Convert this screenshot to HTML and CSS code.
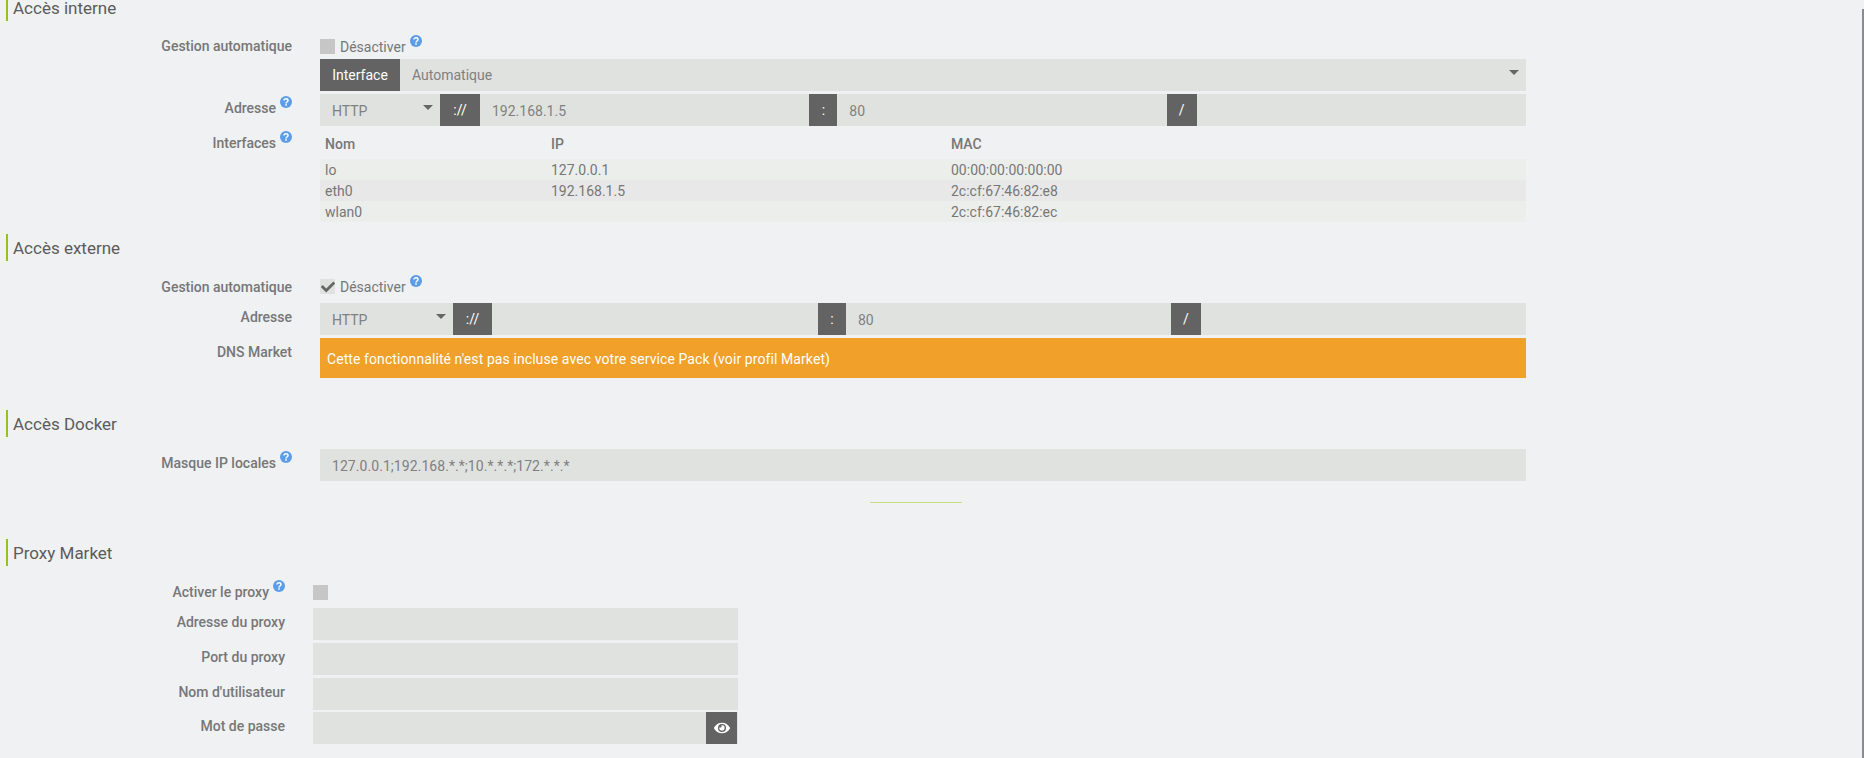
FILE: index.html
```html
<!DOCTYPE html>
<html lang="fr">
<head>
<meta charset="utf-8">
<title>Accès réseau</title>
<link rel="stylesheet" href="styles.css">
</head>
<body>
<svg class="defs" width="0" height="0" aria-hidden="true">
  <symbol id="help" viewBox="0 0 12 12">
    <circle cx="6" cy="6" r="6" fill="#5c9ce8"/>
    <path d="M4 4.6C4 3.4 4.9 2.8 6 2.8s2 .7 2 1.7c0 1.5-2 1.5-2 3" fill="none" stroke="#fff" stroke-width="1.5"/>
    <rect x="5.2" y="8.2" width="1.6" height="1.5" fill="#fff"/>
  </symbol>
</svg>
<main class="page">
  <section class="section">
    <h2 class="legend">Accès interne</h2>
    <div class="row row-check row-first">
      <div class="lbl">Gestion automatique</div>
      <div class="check-line"><span class="check"></span><span>Désactiver</span><svg class="help"><use href="#help"/></svg></div>
    </div>
    <div class="row row-flush">
      <div class="lbl"></div>
      <div class="grp"><span class="addon addon-if">Interface</span><div class="sel sel-fill"><select class="ctl"><option>Automatique</option></select><span class="caret"></span></div></div>
    </div>
    <div class="row">
      <div class="lbl">Adresse<svg class="help"><use href="#help"/></svg></div>
      <div class="grp"><div class="sel sel-a"><select class="ctl"><option>HTTP</option></select><span class="caret"></span></div><span class="addon addon-a">://</span><input class="ctl" value="192.168.1.5"><span class="addon addon-c">:</span><input class="ctl" value="80"><span class="addon addon-s">/</span><input class="ctl" value=""></div>
    </div>
    <div class="row">
      <div class="lbl">Interfaces<svg class="help"><use href="#help"/></svg></div>
      <table class="tbl">
        <thead><tr><th class="c1">Nom</th><th class="c2">IP</th><th>MAC</th></tr></thead>
        <tbody>
          <tr><td>lo</td><td>127.0.0.1</td><td>00:00:00:00:00:00</td></tr>
          <tr><td>eth0</td><td>192.168.1.5</td><td>2c:cf:67:46:82:e8</td></tr>
          <tr><td>wlan0</td><td></td><td>2c:cf:67:46:82:ec</td></tr>
        </tbody>
      </table>
    </div>
  </section>

  <section class="section">
    <h2 class="legend">Accès externe</h2>
    <div class="row row-check">
      <div class="lbl">Gestion automatique</div>
      <div class="check-line"><span class="check check-on"><svg class="tick" viewBox="0 0 512 512"><path d="M173.898 439.404l-166.4-166.4c-9.997-9.997-9.997-26.206 0-36.204l36.203-36.204c9.997-9.998 26.207-9.998 36.204 0L192 312.69 432.095 72.596c9.997-9.997 26.207-9.997 36.204 0l36.203 36.204c9.997 9.997 9.997 26.206 0 36.204l-294.4 294.401c-9.998 9.997-26.207 9.997-36.204-.001z"/></svg></span><span>Désactiver</span><svg class="help"><use href="#help"/></svg></div>
    </div>
    <div class="row row-flush">
      <div class="lbl">Adresse</div>
      <div class="grp"><div class="sel sel-b"><select class="ctl"><option>HTTP</option></select><span class="caret"></span></div><span class="addon addon-b">://</span><input class="ctl ctl-host" value=""><span class="addon addon-c">:</span><input class="ctl" value="80"><span class="addon addon-s">/</span><input class="ctl" value=""></div>
    </div>
    <div class="row">
      <div class="lbl">DNS Market</div>
      <div class="alert">Cette fonctionnalité n'est pas incluse avec votre service Pack (voir profil Market)</div>
    </div>
  </section>

  <section class="section section-far">
    <h2 class="legend">Accès Docker</h2>
    <div class="row">
      <div class="lbl">Masque IP locales<svg class="help"><use href="#help"/></svg></div>
      <div class="grp"><input class="ctl ctl-mask" value="127.0.0.1;192.168.*.*;10.*.*.*;172.*.*.*"></div>
    </div>
    <hr class="rule">
  </section>

  <section class="section section-proxy">
    <h2 class="legend">Proxy Market</h2>
    <div class="row row-check row-low">
      <div class="lbl">Activer le proxy<svg class="help"><use href="#help"/></svg></div>
      <div class="check-line"><span class="check"></span></div>
    </div>
    <div class="row row-flush">
      <div class="lbl">Adresse du proxy</div>
      <div class="grp"><input class="ctl" value=""></div>
    </div>
    <div class="row">
      <div class="lbl">Port du proxy</div>
      <div class="grp"><input class="ctl" value=""></div>
    </div>
    <div class="row">
      <div class="lbl">Nom d'utilisateur</div>
      <div class="grp"><input class="ctl" value=""></div>
    </div>
    <div class="row row-tight">
      <div class="lbl">Mot de passe</div>
      <div class="grp grp-pass"><input class="ctl" type="password" value=""><span class="addon addon-eye"><svg class="eye" viewBox="0 0 576 512"><path d="M572.52 241.4C518.29 135.59 410.93 64 288 64S57.68 135.64 3.48 241.41a32.35 32.35 0 0 0 0 29.19C57.71 376.41 165.07 448 288 448s230.32-71.64 284.52-177.41a32.35 32.35 0 0 0 0-29.19zM288 400a144 144 0 1 1 144-144 143.93 143.93 0 0 1-144 144zm0-240a95.31 95.31 0 0 0-25.31 3.79 47.85 47.85 0 0 1-66.9 66.9A95.78 95.78 0 1 0 288 160z"/></svg></span></div>
    </div>
  </section>
</main>
<div class="scrollbar"></div>
</body>
</html>
```
FILE: styles.css
```css
* { box-sizing: border-box; }
html, body { margin: 0; height: 758px; overflow: hidden; }
body {
  background: #eff1f3;
  color: #777;
  font-family: Roboto, "Liberation Sans", sans-serif;
  font-size: 14px;
  position: relative;
}
.defs { position: absolute; }
.page { margin-top: -6px; padding-left: 6px; width: 1526px; }
.section { margin-bottom: 12px; }
.section-far { margin-top: 32px; margin-bottom: 0; }
.section-proxy { width: 732px; margin-top: 0; }
.legend {
  margin: 0 0 12px;
  height: 27px;
  line-height: 29px;
  padding-left: 5px;
  border-left: 2px solid #93c11e;
  font-size: 17px;
  font-weight: 400;
  color: #5c5c5c;
  white-space: nowrap;
}
.row {
  display: grid;
  grid-template-columns: 284px 1fr;
  column-gap: 28px;
  margin-left: 2px;
  margin-top: 3px;
}
.section-proxy .row { grid-template-columns: 277px 1fr; }
.legend + .row { margin-top: 0; }
.row-flush { margin-top: 0; }
.row-tight { margin-top: 2px; }
.row-check { height: 30px; }
.row-first { height: 26px; }
.lbl {
  display: flex;
  justify-content: flex-end;
  gap: 4px;
  padding-top: 4px;
  line-height: 20px;
  font-size: 14px;
  font-weight: 500;
  color: #777;
  white-space: nowrap;
}
.row-first .lbl { padding-top: 3px; }
.help { width: 12px; height: 12px; flex: none; margin-top: -2px; }
.check-line {
  display: flex;
  align-items: flex-start;
  padding-top: 6px;
  line-height: 16px;
  font-size: 14px;
}
.row-low .check-line { padding-top: 7px; }
.check-line .help { margin: -4px 0 0 4px; }
.check {
  width: 15px;
  height: 15px;
  margin-right: 5px;
  background: #c6c6c6;
  flex: none;
  display: flex;
  align-items: center;
  justify-content: center;
}
.check-on { background: #e0e2e0; }
.tick { width: 14px; height: 14px; fill: #666; }
.grp { display: flex; height: 32px; background: #e0e2e0; }
.ctl {
  flex: 1;
  min-width: 0;
  width: 100%;
  height: 32px;
  border: 0;
  margin: 0;
  padding: 2px 12px 0;
  background: #e0e2e0;
  color: #808080;
  font: 400 14px Roboto, "Liberation Sans", sans-serif;
  appearance: none;
  outline: 0;
}
.ctl-host { flex: none; width: 326px; }
.ctl-mask { letter-spacing: .06px; }
.sel { position: relative; display: flex; }
.sel-fill { flex: 1; }
.sel-fill .ctl { padding-top: 0; }
.sel-a { width: 120px; }
.sel-b { width: 133px; }
.caret {
  position: absolute;
  right: 7px;
  top: 11px;
  width: 0;
  height: 0;
  border-left: 5px solid transparent;
  border-right: 5px solid transparent;
  border-top: 5px solid #666;
}
.addon {
  flex: none;
  display: flex;
  align-items: center;
  justify-content: center;
  height: 32px;
  background: #636363;
  color: #fff;
  font-size: 14px;
}
.addon-if { width: 80px; }
.addon-a { width: 40px; }
.addon-b { width: 39px; }
.addon-c { width: 28px; }
.addon-s { width: 30px; }
.addon-eye { width: 31px; margin-right: 1px; }
.eye { width: 16px; height: 16px; fill: #fff; }
.tbl {
  width: 100%;
  border-collapse: collapse;
  table-layout: fixed;
  font-size: 14px;
}
.tbl th {
  height: 30px;
  padding: 0 5px;
  text-align: left;
  font-weight: 500;
  font-size: 14px;
  color: #777;
}
.tbl .c1 { width: 226px; }
.tbl .c2 { width: 400px; }
.tbl td { height: 21px; padding: 1px 5px 0; line-height: 20px; }
.tbl tbody tr:nth-child(odd) { background: #eceeec; }
.tbl tbody tr:nth-child(even) { background: #e8e8e9; }
.alert {
  height: 40px;
  line-height: 42px;
  padding-left: 7px;
  background: #f1a029;
  color: #fff;
  font-size: 14px;
  letter-spacing: .085px;
}
.rule {
  width: 92px;
  height: 1px;
  margin: 21px 0 36px 864px;
  border: 0;
  background: #c6df80;
}
.scrollbar {
  position: absolute;
  top: 9px;
  right: 0;
  bottom: 0;
  width: 2px;
  background: #8b8c90;
}
```
